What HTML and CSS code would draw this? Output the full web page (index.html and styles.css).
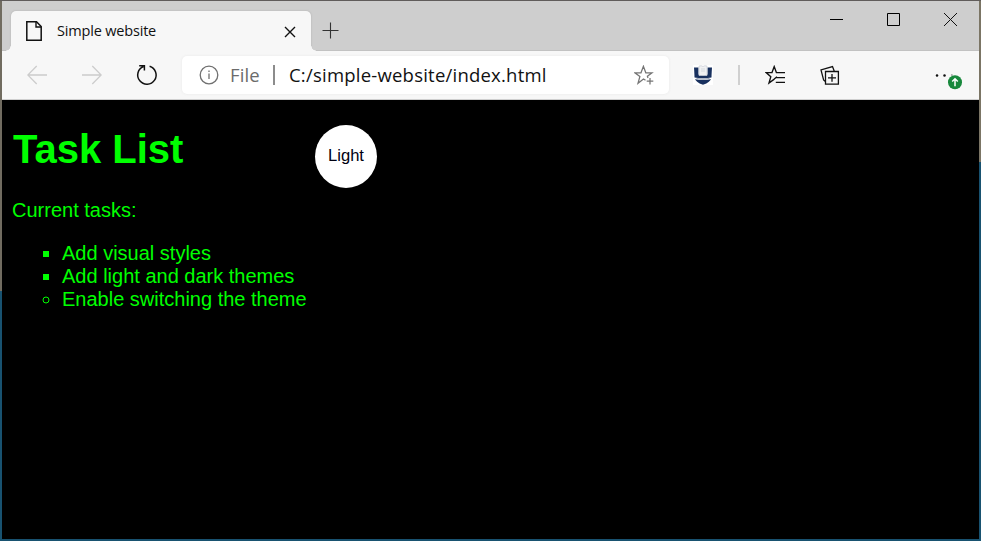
FILE: index.html
```html
<!DOCTYPE html>
<html lang="en">
<head>
<meta charset="utf-8">
<title>Simple website</title>
<link rel="stylesheet" href="styles.css">
</head>
<body>
<div class="window">
  <header class="titlebar">
    <div class="tab">
      <svg class="tab-icon" width="18" height="22" viewBox="0 0 18 22"><path d="M1.8 1.8H11.5L16.2 6.5V20.2H1.8Z" fill="none" stroke="#111" stroke-width="1.5"/><path d="M11 2V7H16" fill="none" stroke="#111" stroke-width="1.4"/></svg>
      <span class="tab-title">Simple website</span>
      <svg class="tab-close" width="12" height="12" viewBox="0 0 12 12"><path d="M1 1L11 11M11 1L1 11" stroke="#111" stroke-width="1.4"/></svg>
    </div>
    <svg class="new-tab" width="17" height="17" viewBox="0 0 17 17"><path d="M8.5 .5V16.5M.5 8.5H16.5" stroke="#333" stroke-width="1.1"/></svg>
    <div class="controls">
      <svg width="13" height="13" viewBox="0 0 13 13"><path d="M0 6.5H13" stroke="#000"/></svg>
      <svg width="13" height="13" viewBox="0 0 13 13"><path d="M.5 .5H12.5V12.5H.5Z" fill="none" stroke="#000"/></svg>
      <svg width="13" height="13" viewBox="0 0 13 13"><path d="M0 0L13 13M13 0L0 13" stroke="#111" stroke-width="1"/></svg>
    </div>
  </header>
  <nav class="toolbar">
    <svg class="back" width="20" height="20" viewBox="0 0 20 20"><path d="M20 10H1M9.7 1L.8 10L9.7 19" fill="none" stroke="#ccc" stroke-width="1.3"/></svg>
    <svg class="forward" width="20" height="20" viewBox="0 0 20 20"><path d="M0 10H19M10.3 1L19.2 10L10.3 19" fill="none" stroke="#ccc" stroke-width="1.3"/></svg>
    <svg class="reload" width="22" height="22" viewBox="0 0 22 22"><path d="M13.6 2.2A9.2 9.2 0 1 1 7.4 2.5M3.2 1.7H8.4V6.6" fill="none" stroke="#111" stroke-width="1.5"/></svg>
    <div class="address">
      <svg class="info" width="20" height="20" viewBox="0 0 20 20"><circle cx="10" cy="10" r="8.8" fill="none" stroke="#707070" stroke-width="1.3"/><path d="M10 8.5V14M10 5.4V7" stroke="#707070" stroke-width="1.3"/></svg>
      <span class="scheme">File</span>
      <span class="bar"></span>
      <span class="url">C:/simple-website/index.html</span>
      <svg class="favorite" width="20" height="21" viewBox="0 0 20 21"><path d="M11.5 15.3L9.5 14L4 18.3L5.9 11.5L.9 7.8H7L9.4 1.3L11.8 7.8H18L13.4 11.3L14 13M16 13V19.5M12.7 16.2H19.3" fill="none" stroke="#757575" stroke-width="1.25"/></svg>
    </div>
    <svg class="shield" width="20" height="20" viewBox="0 0 20 20"><path fill="#fff" d="M0 0H20V20H0Z"/><path d="M1 2.5H5.5V9.5Q10 11 14.5 9.5V2.5H19Q18.5 10 18.5 12.5Q17.5 17.5 10 19.7Q2.5 17.5 1.5 12.5Q1.5 10 1 2.5Z" fill="#18305e"/><path d="M6 1Q8.5 .3 10 1.5Q11.5 .3 14 1V10.5H6Z" fill="#f0f1f3" stroke="#c8cdd5" stroke-width=".7"/><path d="M8 4H12M8 6H12" stroke="#c9ced6" stroke-width=".7"/><path d="M1 12.5Q10 14 19 12.5V14Q10 15.8 1 14Z" fill="#fff"/><path d="M3.5 13.5Q10 14.8 16.5 13.5" fill="none" stroke="#6f7d98" stroke-width=".8"/></svg>
    <span class="divider"></span>
    <svg class="favorites" width="21" height="20" viewBox="0 0 21 20"><path d="M9.3 14.1L4 18L5.8 11.8L1.2 7.6H7L9.2 1.6L11.4 7.6H20M11.2 12.6H20M10.8 17.4H20M9.2 14L12 11.7" fill="none" stroke="#111" stroke-width="1.35"/></svg>
    <svg class="collections" width="20" height="20" viewBox="0 0 20 20"><path d="M5.5 6.5H18.4V19.1H5.5ZM12 9V16.8M8 12.9H16M5 16.2L3.6 15L1 5L12.5 1.6L14.3 6.2" fill="none" stroke="#111" stroke-width="1.3"/></svg>
    <svg class="menu" width="28" height="26" viewBox="0 0 28 26"><g fill="#111"><circle cx="2" cy="8.5" r="1.25"/><circle cx="9.5" cy="8.5" r="1.25"/><circle cx="16.8" cy="8" r="1" opacity=".35"/></g><circle cx="20" cy="15.3" r="7" fill="#18883c"/><path d="M20 19.3V12M17.2 14.5L20 11.8L22.8 14.5" fill="none" stroke="#fff" stroke-width="1.5"/></svg>
  </nav>
  <main class="page">
    <section class="tasks">
      <h1>Task List</h1>
      <p>Current tasks:</p>
      <ul>
        <li>Add visual styles</li>
        <li>Add light and dark themes</li>
        <li class="open">Enable switching the theme</li>
      </ul>
    </section>
    <button class="theme">Light</button>
  </main>
</div>
</body>
</html>
```
FILE: styles.css
```css
* { box-sizing: border-box; }
html { height: 541px; }
body {
  margin: 0;
  height: 541px;
  overflow: hidden;
  padding: 1px 2px 2px;
  background:
    linear-gradient(#605c5b, #605c5b) 0 0 / 100% 1px no-repeat,
    linear-gradient(#716c60, #716c60) 0 0 / 2px 291px no-repeat,
    linear-gradient(#7b7565, #7b7565) 100% 0 / 2px 162px no-repeat,
    #185270;
}
svg { display: block; flex: none; }
.window { display: flex; flex-direction: column; height: 538px; background: #000; }
.titlebar {
  display: flex;
  height: 50px;
  padding: 10px 22px 0 9px;
  background: #cecece;
  box-shadow: inset 0 -1px #c2c2c2;
}
.tab {
  position: relative;
  display: flex;
  align-items: center;
  width: 300px;
  height: 40px;
  padding: 0 15px 0 14px;
  border-radius: 5px 5px 0 0;
  background: #f7f7f7;
  box-shadow: 0 0 2px #aaa;
  font: 14.5px "Open Sans", sans-serif;
  color: #111;
}
.tab::before, .tab::after {
  content: "";
  position: absolute;
  bottom: 0;
  width: 5px;
  height: 5px;
}
.tab::before { left: -5px; background: radial-gradient(circle at 0 0, transparent 4.2px, #f7f7f7 4.8px); }
.tab::after { right: -5px; background: radial-gradient(circle at 100% 0, transparent 4.2px, #f7f7f7 4.8px); }
.tab-title { margin-left: 14px; padding-bottom: 2px; letter-spacing: -0.18px; white-space: nowrap; }
.tab-close { margin-left: auto; margin-top: 2px; }
.new-tab { margin: 11px 0 0 11px; }
.controls { display: flex; gap: 44px; margin: 2px 0 0 auto; }
.toolbar {
  position: relative;
  display: flex;
  align-items: center;
  flex: none;
  height: 49px;
  padding-left: 25px;
  background: #f7f7f7;
  border-bottom: 1px solid #cfcfcf;
}
.forward { margin-left: 35px; }
.reload { margin-left: 34px; }
.address {
  display: flex;
  align-items: center;
  width: 487px;
  height: 38px;
  margin-left: 24px;
  padding: 0 15px 0 17px;
  border-radius: 5px;
  background: #fff;
  box-shadow: 0 0 3px #e8e8e8;
  font: 18.5px "Open Sans", sans-serif;
  color: #111;
}
.scheme { width: 31px; margin-left: 11px; padding-bottom: 2px; color: #6b6b6b; letter-spacing: 0.1px; }
.bar { width: 2px; height: 20px; margin-left: 12px; background: #8c8c8c; }
.url { margin-left: 14px; padding-bottom: 2px; letter-spacing: 0.22px; white-space: nowrap; }
.favorite { margin-left: auto; }
.shield { margin-left: 24px; }
.divider { width: 2px; height: 20px; margin-left: 25px; background: #d0d0d0; }
.favorites { margin-left: 25px; }
.collections { margin-left: 34px; }
.menu { margin: 9px 0 0 95px; }
.page {
  display: flex;
  align-items: flex-start;
  flex: 1;
  padding-left: 10px;
  background: #000;
  color: #0f0;
  font: 20px/23px "Liberation Sans", Arial, sans-serif;
}
.tasks { width: 303px; white-space: nowrap; }
h1 { margin: 26px 0 27px; padding-left: 1px; font-size: 40px; line-height: 46px; }
p { margin: 0 0 20px; }
ul { margin: 0; padding-left: 50px; list-style: square; }
.open { list-style: circle; }
.theme {
  width: 62px;
  height: 63px;
  margin: 25px 0 0;
  padding: 0 0 2px;
  border: 0;
  border-radius: 50%;
  background: #fff;
  color: #001;
  font: 16.6px "Liberation Sans", Arial, sans-serif;
}
```
